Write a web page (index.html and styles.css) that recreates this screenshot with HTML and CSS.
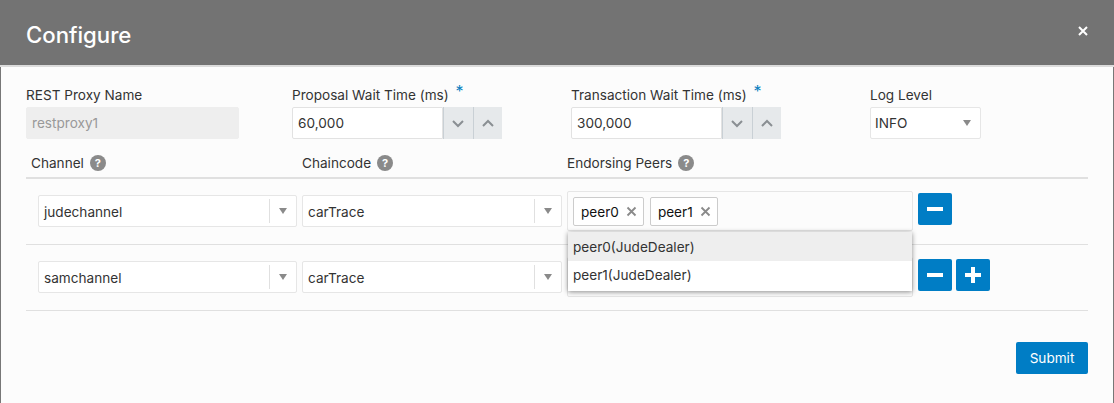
FILE: index.html
```html
<!DOCTYPE html>
<html lang="en">
<head>
    <meta charset="UTF-8">
    <meta name="viewport" content="width=device-width, initial-scale=1.0">
    <title>Configure</title>
    <link rel="stylesheet" href="styles.css">
</head>
<body>

    <div class="modal">
        <header class="modal-header">
            <h1>Configure</h1>
            <svg class="close-icon" width="10" height="10" viewBox="0 0 10 10"><path d="M1 1L9 9M9 1L1 9"/></svg>
        </header>

        <div class="modal-body">
            <div class="top-fields">
                <div class="field field-name">
                    <label>REST Proxy Name</label>
                    <div class="text-box disabled">restproxy1</div>
                </div>
                <div class="field field-number">
                    <label>Proposal Wait Time (ms) <span class="required">*</span></label>
                    <div class="number-box">
                        <div class="text-box">60,000</div>
                        <div class="step"><svg width="14" height="9" viewBox="0 0 14 9"><path d="M2 2L7 7L12 2"/></svg></div>
                        <div class="step"><svg width="14" height="9" viewBox="0 0 14 9"><path d="M2 7L7 2L12 7"/></svg></div>
                    </div>
                </div>
                <div class="field field-number field-transaction">
                    <label>Transaction Wait Time (ms) <span class="required">*</span></label>
                    <div class="number-box">
                        <div class="text-box">300,000</div>
                        <div class="step"><svg width="14" height="9" viewBox="0 0 14 9"><path d="M2 2L7 7L12 2"/></svg></div>
                        <div class="step"><svg width="14" height="9" viewBox="0 0 14 9"><path d="M2 7L7 2L12 7"/></svg></div>
                    </div>
                </div>
                <div class="field field-log">
                    <label>Log Level</label>
                    <div class="select plain"><span>INFO</span><i class="arrow"></i></div>
                </div>
            </div>

            <div class="table-head">
                <div class="col-channel">Channel <span class="help">?</span></div>
                <div class="col-chaincode">Chaincode <span class="help">?</span></div>
                <div class="col-peers">Endorsing Peers <span class="help">?</span></div>
            </div>

            <div class="row">
                <div class="select channel"><span>judechannel</span><b></b><i class="arrow"></i></div>
                <div class="select chaincode"><span>carTrace</span><b></b><i class="arrow"></i></div>
                <div class="multi">
                    <div class="chip">peer0 <svg width="11" height="11" viewBox="0 0 11 11"><path d="M1.5 1.5L9.5 9.5M9.5 1.5L1.5 9.5"/></svg></div>
                    <div class="chip">peer1 <svg width="11" height="11" viewBox="0 0 11 11"><path d="M1.5 1.5L9.5 9.5M9.5 1.5L1.5 9.5"/></svg></div>
                    <ul class="dropdown">
                        <li class="active">peer0(JudeDealer)</li>
                        <li>peer1(JudeDealer)</li>
                    </ul>
                </div>
                <div class="actions">
                    <button class="icon-btn"><svg width="16" height="16" viewBox="0 0 16 16"><path d="M0 6H16V10H0Z"/></svg></button>
                </div>
            </div>

            <div class="row">
                <div class="select channel"><span>samchannel</span><b></b><i class="arrow"></i></div>
                <div class="select chaincode"><span>carTrace</span><b></b><i class="arrow"></i></div>
                <div class="multi"></div>
                <div class="actions">
                    <button class="icon-btn"><svg width="16" height="16" viewBox="0 0 16 16"><path d="M0 6H16V10H0Z"/></svg></button>
                    <button class="icon-btn"><svg width="16" height="16" viewBox="0 0 16 16"><path d="M6 0H10V6H16V10H10V16H6V10H0V6H6Z"/></svg></button>
                </div>
            </div>

            <div class="footer">
                <button class="submit">Submit</button>
            </div>
        </div>
    </div>

</body>
</html>
```

FILE: styles.css
```css
html, body {
    margin: 0;
    padding: 0;
    height: 100%;
    overflow: hidden;
}

body {
    font-family: Inter, "Liberation Sans", sans-serif;
    font-size: 13.6px;
    color: #333;
    background-color: #777;
}

.modal {
    height: 403px;
    margin: 0 1px;
    background-color: #fcfcfc;
}

.modal-header {
    height: 65px;
    margin: 0 -1px;
    padding: 0 26px;
    background-color: #737373;
    border-bottom: 2px solid #dcdcdc;
    display: flex;
    align-items: center;
    justify-content: space-between;
}

.modal-header h1 {
    margin: 3px 0 0;
    font-size: 22.2px;
    font-weight: 500;
    color: #fff;
}

.close-icon {
    margin: -3px 0 0;
}

.close-icon path {
    stroke: #fff;
    stroke-width: 2;
    fill: none;
}

.modal-body {
    padding: 19px 25px 0;
}

.top-fields {
    display: flex;
    height: 53px;
}

.field label {
    display: block;
    height: 21px;
    line-height: 18px;
    color: #333;
}

.field-name {
    width: 213px;
    margin-right: 53px;
}

.field-number {
    width: 210px;
    margin-right: 69px;
}

.field-transaction {
    margin-right: 89px;
}

.field-log {
    width: 111px;
}

.required {
    position: relative;
    top: -3px;
    margin-left: 3px;
    font-size: 16px;
    line-height: 1;
    color: #0a7fc0;
}

.text-box {
    box-sizing: border-box;
    height: 32px;
    line-height: 31px;
    padding: 0 5px;
    background-color: #fff;
    border: 1px solid #e2e2e2;
    border-radius: 2px;
}

.text-box.disabled {
    background-color: #eee;
    border-color: #eee;
    color: #999;
}

.number-box {
    display: flex;
}

.number-box .text-box {
    flex: 1;
    border-radius: 2px 0 0 2px;
}

.step {
    box-sizing: border-box;
    width: 29.5px;
    height: 32px;
    background-color: #e6e9eb;
    border-left: 1px solid #c9d0d5;
    display: flex;
    align-items: center;
    justify-content: center;
}

.step svg path {
    stroke: #8a8f93;
    stroke-width: 2;
    fill: none;
}

.table-head {
    display: flex;
    height: 40px;
    box-sizing: border-box;
    border-bottom: 2px solid #e0e0e0;
    padding-top: 14px;
}

.table-head > div {
    display: flex;
    align-items: center;
    height: 20px;
    gap: 6px;
}

.col-channel {
    width: 276px;
    padding-left: 5px;
    box-sizing: border-box;
}

.col-chaincode {
    width: 265px;
}

.help {
    display: inline-block;
    width: 16px;
    height: 16px;
    line-height: 16px;
    border-radius: 50%;
    background-color: #8a8a8a;
    color: #fff;
    font-size: 11px;
    font-weight: 700;
    text-align: center;
}

.row {
    display: flex;
    align-items: center;
    gap: 5px;
    height: 64px;
    padding: 0 0 1px 12px;
    border-bottom: 1px solid #e0e0e0;
}

.select {
    box-sizing: border-box;
    height: 32px;
    padding: 0 5px;
    background-color: #fff;
    border: 1px solid #e6e6e6;
    border-radius: 2px;
    display: flex;
    align-items: center;
}

.select.plain {
    padding-left: 4px;
}

.select span {
    flex: 1;
    margin-top: 1px;
}

.select.plain span {
    margin-top: 0;
}

.select b {
    width: 1px;
    height: 24px;
    background-color: #e0e0e0;
}

.arrow {
    width: 0;
    height: 0;
    margin: 0 4px 0 9px;
    border-left: 4.5px solid transparent;
    border-right: 4.5px solid transparent;
    border-top: 6px solid #8a8a8a;
}

.channel {
    width: 259px;
}

.chaincode {
    width: 260px;
}

.multi {
    position: relative;
    box-sizing: border-box;
    width: 346px;
    height: 40px;
    padding: 5px;
    border: 1px solid #e6e6e6;
    border-radius: 2px;
    display: flex;
    align-items: flex-start;
    gap: 6px;
}

.chip {
    box-sizing: border-box;
    height: 29px;
    padding: 1px 6px 0 7px;
    background-color: #fff;
    border: 1px solid #ccc;
    border-radius: 2px;
    color: #111;
    display: flex;
    align-items: center;
    gap: 7px;
}

.chip svg {
    margin-top: -1px;
}

.chip svg path {
    stroke: #8a8a8a;
    stroke-width: 1.8;
    fill: none;
}

.dropdown {
    position: absolute;
    top: 40px;
    left: 0;
    right: 0;
    z-index: 2;
    margin: 0;
    padding: 0;
    list-style: none;
    background-color: #fff;
    box-shadow: 0 1px 5px rgba(0, 0, 0, 0.45);
}

.dropdown li {
    height: 29px;
    line-height: 30px;
    padding: 0 5px;
}

.dropdown li + li {
    height: 30px;
    line-height: 29px;
}

.dropdown li.active {
    background-color: #eee;
}

.actions {
    display: flex;
    gap: 4px;
    margin-bottom: 4px;
}

.icon-btn, .submit {
    border: none;
    border-radius: 2px;
    padding: 0;
    background-color: #007dc5;
    color: #fff;
    cursor: pointer;
}

.icon-btn {
    width: 34px;
    height: 32px;
    display: flex;
    align-items: center;
    justify-content: center;
}

.icon-btn path {
    fill: #fff;
}

.footer {
    display: flex;
    justify-content: flex-end;
    margin-top: 31px;
}

.submit {
    width: 72px;
    height: 32px;
    font-family: inherit;
    font-size: 13.6px;
}
```
